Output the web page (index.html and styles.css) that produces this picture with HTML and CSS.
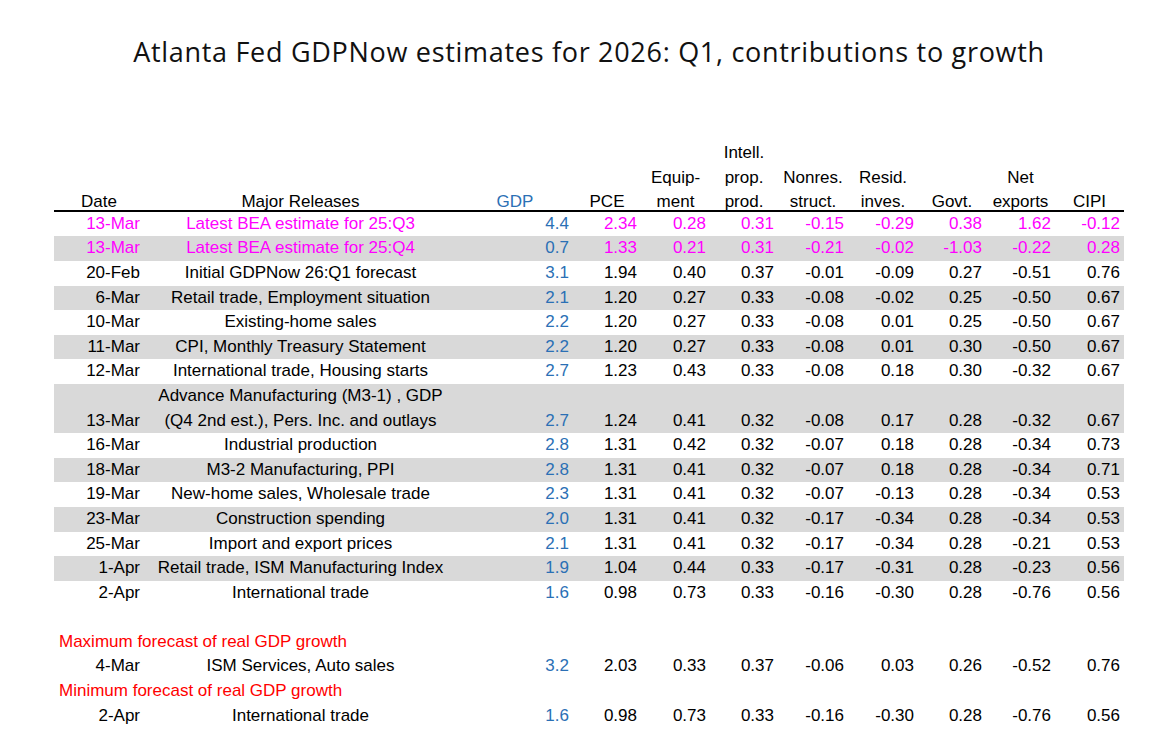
FILE: index.html
```html
<!DOCTYPE html>
<html>
<head>
<meta charset="utf-8">
<link rel="stylesheet" href="styles.css">
</head>
<body>
<div class="page">
  <h1 class="title">Atlanta Fed GDPNow estimates for 2026: Q1, contributions to growth</h1>
  <div class="table">
    <div class="row head">
      <div class="c">Date</div>
      <div class="c">Major Releases</div>
      <div class="c gdp">GDP</div>
      <div class="c">PCE</div>
      <div class="c">Equip-<br>ment</div>
      <div class="c">Intell.<br>prop.<br>prod.</div>
      <div class="c">Nonres.<br>struct.</div>
      <div class="c">Resid.<br>inves.</div>
      <div class="c">Govt.</div>
      <div class="c">Net<br>exports</div>
      <div class="c">CIPI</div>
    </div>

    <div class="row bea">
      <div class="d">13-Mar</div><div class="r">Latest BEA estimate for 25:Q3</div><div class="n gdp">4.4</div>
      <div class="n">2.34</div><div class="n">0.28</div><div class="n">0.31</div><div class="n">-0.15</div><div class="n">-0.29</div><div class="n">0.38</div><div class="n">1.62</div><div class="n">-0.12</div>
    </div>
    <div class="row bea shade">
      <div class="d">13-Mar</div><div class="r">Latest BEA estimate for 25:Q4</div><div class="n gdp">0.7</div>
      <div class="n">1.33</div><div class="n">0.21</div><div class="n">0.31</div><div class="n">-0.21</div><div class="n">-0.02</div><div class="n">-1.03</div><div class="n">-0.22</div><div class="n">0.28</div>
    </div>
    <div class="row">
      <div class="d">20-Feb</div><div class="r">Initial GDPNow 26:Q1 forecast</div><div class="n gdp">3.1</div>
      <div class="n">1.94</div><div class="n">0.40</div><div class="n">0.37</div><div class="n">-0.01</div><div class="n">-0.09</div><div class="n">0.27</div><div class="n">-0.51</div><div class="n">0.76</div>
    </div>
    <div class="row shade">
      <div class="d">6-Mar</div><div class="r">Retail trade, Employment situation</div><div class="n gdp">2.1</div>
      <div class="n">1.20</div><div class="n">0.27</div><div class="n">0.33</div><div class="n">-0.08</div><div class="n">-0.02</div><div class="n">0.25</div><div class="n">-0.50</div><div class="n">0.67</div>
    </div>
    <div class="row">
      <div class="d">10-Mar</div><div class="r">Existing-home sales</div><div class="n gdp">2.2</div>
      <div class="n">1.20</div><div class="n">0.27</div><div class="n">0.33</div><div class="n">-0.08</div><div class="n">0.01</div><div class="n">0.25</div><div class="n">-0.50</div><div class="n">0.67</div>
    </div>
    <div class="row shade">
      <div class="d">11-Mar</div><div class="r">CPI, Monthly Treasury Statement</div><div class="n gdp">2.2</div>
      <div class="n">1.20</div><div class="n">0.27</div><div class="n">0.33</div><div class="n">-0.08</div><div class="n">0.01</div><div class="n">0.30</div><div class="n">-0.50</div><div class="n">0.67</div>
    </div>
    <div class="row">
      <div class="d">12-Mar</div><div class="r">International trade, Housing starts</div><div class="n gdp">2.7</div>
      <div class="n">1.23</div><div class="n">0.43</div><div class="n">0.33</div><div class="n">-0.08</div><div class="n">0.18</div><div class="n">0.30</div><div class="n">-0.32</div><div class="n">0.67</div>
    </div>
    <div class="row shade">
      <div class="d">13-Mar</div><div class="r">Advance Manufacturing (M3-1) , GDP<br>(Q4 2nd est.), Pers. Inc. and outlays</div><div class="n gdp">2.7</div>
      <div class="n">1.24</div><div class="n">0.41</div><div class="n">0.32</div><div class="n">-0.08</div><div class="n">0.17</div><div class="n">0.28</div><div class="n">-0.32</div><div class="n">0.67</div>
    </div>
    <div class="row">
      <div class="d">16-Mar</div><div class="r">Industrial production</div><div class="n gdp">2.8</div>
      <div class="n">1.31</div><div class="n">0.42</div><div class="n">0.32</div><div class="n">-0.07</div><div class="n">0.18</div><div class="n">0.28</div><div class="n">-0.34</div><div class="n">0.73</div>
    </div>
    <div class="row shade">
      <div class="d">18-Mar</div><div class="r">M3-2 Manufacturing, PPI</div><div class="n gdp">2.8</div>
      <div class="n">1.31</div><div class="n">0.41</div><div class="n">0.32</div><div class="n">-0.07</div><div class="n">0.18</div><div class="n">0.28</div><div class="n">-0.34</div><div class="n">0.71</div>
    </div>
    <div class="row">
      <div class="d">19-Mar</div><div class="r">New-home sales, Wholesale trade</div><div class="n gdp">2.3</div>
      <div class="n">1.31</div><div class="n">0.41</div><div class="n">0.32</div><div class="n">-0.07</div><div class="n">-0.13</div><div class="n">0.28</div><div class="n">-0.34</div><div class="n">0.53</div>
    </div>
    <div class="row shade">
      <div class="d">23-Mar</div><div class="r">Construction spending</div><div class="n gdp">2.0</div>
      <div class="n">1.31</div><div class="n">0.41</div><div class="n">0.32</div><div class="n">-0.17</div><div class="n">-0.34</div><div class="n">0.28</div><div class="n">-0.34</div><div class="n">0.53</div>
    </div>
    <div class="row">
      <div class="d">25-Mar</div><div class="r">Import and export prices</div><div class="n gdp">2.1</div>
      <div class="n">1.31</div><div class="n">0.41</div><div class="n">0.32</div><div class="n">-0.17</div><div class="n">-0.34</div><div class="n">0.28</div><div class="n">-0.21</div><div class="n">0.53</div>
    </div>
    <div class="row shade">
      <div class="d">1-Apr</div><div class="r">Retail trade, ISM Manufacturing Index</div><div class="n gdp">1.9</div>
      <div class="n">1.04</div><div class="n">0.44</div><div class="n">0.33</div><div class="n">-0.17</div><div class="n">-0.31</div><div class="n">0.28</div><div class="n">-0.23</div><div class="n">0.56</div>
    </div>
    <div class="row">
      <div class="d">2-Apr</div><div class="r">International trade</div><div class="n gdp">1.6</div>
      <div class="n">0.98</div><div class="n">0.73</div><div class="n">0.33</div><div class="n">-0.16</div><div class="n">-0.30</div><div class="n">0.28</div><div class="n">-0.76</div><div class="n">0.56</div>
    </div>

    <div class="row blank"></div>

    <div class="label">Maximum forecast of real GDP growth</div>
    <div class="row">
      <div class="d">4-Mar</div><div class="r">ISM Services, Auto sales</div><div class="n gdp">3.2</div>
      <div class="n">2.03</div><div class="n">0.33</div><div class="n">0.37</div><div class="n">-0.06</div><div class="n">0.03</div><div class="n">0.26</div><div class="n">-0.52</div><div class="n">0.76</div>
    </div>
    <div class="label">Minimum forecast of real GDP growth</div>
    <div class="row">
      <div class="d">2-Apr</div><div class="r">International trade</div><div class="n gdp">1.6</div>
      <div class="n">0.98</div><div class="n">0.73</div><div class="n">0.33</div><div class="n">-0.16</div><div class="n">-0.30</div><div class="n">0.28</div><div class="n">-0.76</div><div class="n">0.56</div>
    </div>
  </div>
</div>
</body>
</html>
```

FILE: styles.css
```css
html, body {
  margin: 0;
  padding: 0;
  background: #ffffff;
}

.page {
  padding: 35px 0 0 54px;
}

.title {
  width: 1070px;
  margin: 0;
  text-align: center;
  font-family: "Open Sans", "Noto Sans", sans-serif;
  font-weight: 400;
  font-size: 27px;
  letter-spacing: 0.7px;
  line-height: 34px;
  color: #111111;
}

.table {
  width: 1070px;
  margin-top: 72px;
  font-family: "Liberation Sans", Arial, sans-serif;
  font-size: 17px;
  line-height: 24.6px;
  color: #000000;
}

.row {
  display: grid;
  grid-template-columns: 90px 313px 116px 68px 69px 68px 70px 70px 68px 69px 69px;
  align-items: end;
}

.row.head {
  border-bottom: 2px solid #000000;
}

.c {
  text-align: center;
  white-space: nowrap;
  margin-bottom: -5px;
}

.d,
.n {
  text-align: right;
  padding-right: 4px;
  white-space: nowrap;
}

.r {
  text-align: center;
  white-space: nowrap;
}

.gdp {
  color: #2b70b5;
}

.bea .d,
.bea .r,
.bea .n {
  color: #ff00ff;
}

.bea .n.gdp {
  color: #2b70b5;
}

.shade {
  background: #d9d9d9;
}

.blank {
  height: 24.6px;
}

.label {
  color: #ff0000;
  padding-left: 5px;
  white-space: nowrap;
}
```
